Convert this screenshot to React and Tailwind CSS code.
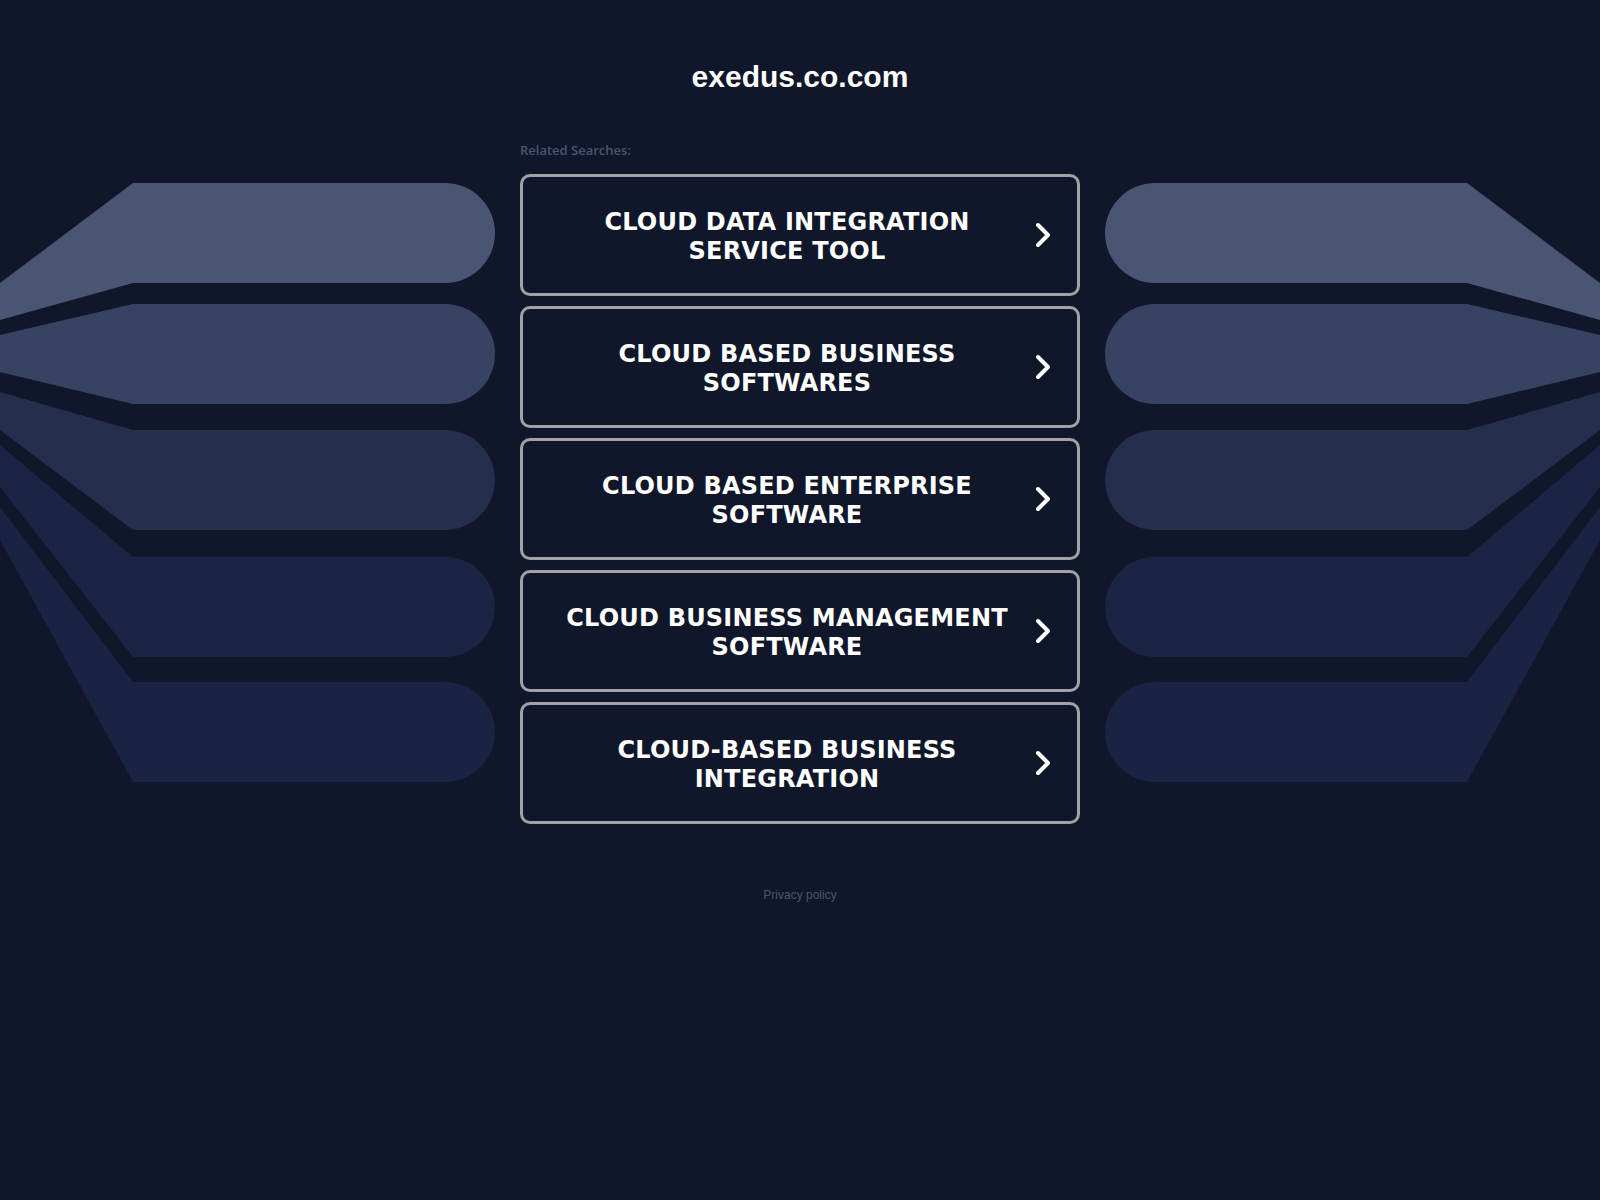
import React from 'react';

const searches = [
  'CLOUD DATA INTEGRATION SERVICE TOOL',
  'CLOUD BASED BUSINESS SOFTWARES',
  'CLOUD BASED ENTERPRISE SOFTWARE',
  'CLOUD BUSINESS MANAGEMENT SOFTWARE',
  'CLOUD-BASED BUSINESS INTEGRATION',
];

// fan of bars on each side, drawn for the left side and mirrored for the right
const bars = [
  { d: 'M0,113 L133,13 L445,13 A50,50 0 0 1 445,113 L133,113 L0,150 Z', fill: '#4a5573' },
  { d: 'M0,165 L133,134 L445,134 A50,50 0 0 1 445,234 L133,234 L0,202 Z', fill: '#384262' },
  { d: 'M0,222 L133,260 L445,260 A50,50 0 0 1 445,360 L133,360 L0,260 Z', fill: '#252f4d' },
  { d: 'M0,275 L133,387 L445,387 A50,50 0 0 1 445,487 L133,487 L0,317 Z', fill: '#1b2444' },
  { d: 'M0,337 L133,512 L445,512 A50,50 0 0 1 445,612 L133,612 L0,370 Z', fill: '#1a2343' },
];

function Fan({ mirrored }) {
  return (
    <svg
      width="495"
      height="620"
      viewBox="0 0 495 620"
      className={mirrored ? 'mt-[28px] shrink-0 -scale-x-100' : 'mt-[28px] shrink-0'}
    >
      <defs>
        <pattern id={mirrored ? 'dotsR' : 'dotsL'} width="4" height="4" patternUnits="userSpaceOnUse">
          <rect x="1" y="1" width="1" height="1" fill="#141c36" />
        </pattern>
      </defs>
      {bars.map((b, i) => (
        <g key={i}>
          <path d={b.d} fill={b.fill} />
          {i > 2 && <path d={b.d} fill={mirrored ? 'url(#dotsR)' : 'url(#dotsL)'} opacity="0.5" />}
        </g>
      ))}
    </svg>
  );
}

function SearchButton({ label }) {
  return (
    <a
      href="#"
      className="flex h-[122px] w-[560px] items-center rounded-[10px] border-[3px] border-[#a2a2a6] pl-[36px] pr-[26px]"
    >
      <span className="flex-1 pt-[4px] text-center text-[24px] font-bold leading-[28.6px] tracking-[0.2px] text-white [font-family:'DejaVu_Sans',Verdana,sans-serif]">
        {label}
      </span>
      <svg width="16" height="26" viewBox="0 0 16 26" className="ml-[20px] shrink-0">
        <polyline
          points="3,3 13,13 3,23"
          fill="none"
          stroke="white"
          strokeWidth="4"
          strokeLinecap="round"
          strokeLinejoin="round"
        />
      </svg>
    </a>
  );
}

export default function App() {
  return (
    <div className="min-h-[1200px] w-full overflow-hidden bg-[#10172a] pt-[59px]">
      <h1 className="text-center text-[30px] font-bold leading-[36px] text-white [font-family:'Liberation_Sans',Arial,sans-serif]">
        exedus.co.com
      </h1>

      <div className="mt-[47px] flex justify-center gap-[25px]">
        <Fan />
        <div className="flex w-[560px] shrink-0 flex-col">
          <p className="mb-[16px] text-[13px] font-semibold leading-[16px] text-[#4a5573] [font-family:'Open_Sans',sans-serif]">
            Related Searches:
          </p>
          <div className="flex flex-col gap-[10px]">
            {searches.map((s) => (
              <SearchButton key={s} label={s} />
            ))}
          </div>
          <p className="mt-[63px] text-center text-[12px] leading-[16px] text-[#4a5573] [font-family:'Liberation_Sans',Arial,sans-serif]">
            <a href="#">Privacy policy</a>
          </p>
        </div>
        <Fan mirrored />
      </div>
    </div>
  );
}
